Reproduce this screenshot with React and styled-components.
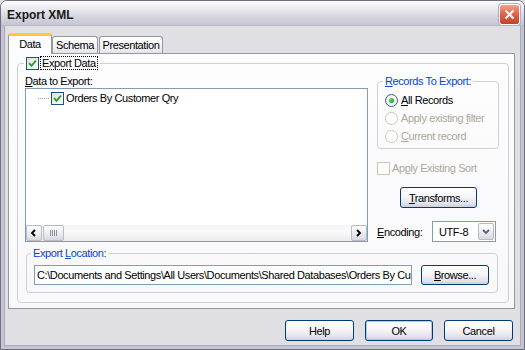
import React from "react";
import styled, { createGlobalStyle, css } from "styled-components";

const GlobalStyle = createGlobalStyle`
  html, body {
    margin: 0;
    padding: 0;
    background: #e0dfe3;
  }
  body {
    font-family: "Liberation Sans", Arial, sans-serif;
    font-size: 11px;
    letter-spacing: -0.4px;
    color: #000;
  }
  * {
    box-sizing: border-box;
  }
`;

const Frame = styled.div`
  width: 525px;
  height: 350px;
  display: flex;
  flex-direction: column;
  background: #e0dfe3;
  border: 1px solid #6f6f80;
  border-radius: 7px 7px 0 0;
  overflow: hidden;
`;

const TitleBar = styled.div`
  height: 25px;
  flex: none;
  display: flex;
  align-items: center;
  justify-content: space-between;
  padding: 3px 4px 0 6px;
  background: linear-gradient(180deg, #ffffff 0%, #eeeef3 25%, #d9d9e2 60%, #c6c6d4 100%);
  border-bottom: 1px solid #b8b8c8;
`;

const Title = styled.div`
  font-size: 12px;
  font-weight: bold;
  letter-spacing: 0;
  color: #1a1a1a;
`;

const CloseButton = styled.div`
  width: 21px;
  height: 21px;
  border: 1px solid #fff;
  border-radius: 3px;
  background: linear-gradient(180deg, #f0a48c 0%, #e2654a 45%, #c8412a 100%);
  display: flex;
  align-items: center;
  justify-content: center;
  box-shadow: 0 0 0 1px #b0b0c0;
`;

const Body = styled.div`
  flex: 1;
  display: flex;
  flex-direction: column;
  padding: 7px 5px 0 4px;
  border-left: 3px solid #c4c4d2;
  border-right: 3px solid #c4c4d2;
  border-bottom: 3px solid #c4c4d2;
  box-shadow: inset 1px 0 #a8a8b8, inset -1px 0 #a8a8b8, inset 0 -1px #a8a8b8;
`;

const TabRow = styled.div`
  display: flex;
  align-items: flex-end;
  height: 21px;
  margin-bottom: -1px;
  position: relative;
  z-index: 1;
`;

const Tab = styled.div`
  width: ${(p) => p.$w}px;
  margin-left: ${(p) => p.$ml || 0}px;
  display: flex;
  align-items: center;
  justify-content: center;
  border: 1px solid #919b9c;
  border-bottom: none;
  border-radius: 3px 3px 0 0;
  ${(p) =>
    p.$active
      ? css`
          height: 21px;
          background: #fcfcfe;
          border-top: 3px solid #ffc83c;
          padding-bottom: 2px;
        `
      : css`
          height: 17px;
          margin-bottom: 1px;
          background: linear-gradient(180deg, #ffffff 0%, #f3f3f6 60%, #e2e2ea 100%);
        `}
`;

const TabPanel = styled.div`
  height: 256px;
  width: 507px;
  border: 1px solid #919b9c;
  background: linear-gradient(180deg, #fdfdfe 0%, #f8f8fa 100%);
  padding: 2px 5px 5px 8px;
`;

const Group = styled.fieldset`
  min-width: 0;
  border: 1px solid #d0d0d4;
  border-radius: 4px;
  padding: ${(p) => p.$pad};
  margin: ${(p) => p.$margin || 0};
`;

const Legend = styled.legend`
  padding: 0 2px;
  margin-left: ${(p) => p.$ml || 0}px;
  height: 14px;
  line-height: 14px;
  color: ${(p) => p.$color || "#0046d5"};
  display: flex;
  align-items: center;
`;

const FocusLabel = styled.span`
  border: 1px dotted #000;
  padding: 0 1px;
  line-height: 12px;
  margin-left: 1px;
`;

const U = styled.span`
  text-decoration: underline;
  text-underline-offset: 1px;
`;

const MainRow = styled.div`
  display: flex;
  gap: 9px;
`;

const LeftCol = styled.div`
  width: 343px;
  display: flex;
  flex-direction: column;
`;

const RightCol = styled.div`
  width: 122px;
  display: flex;
  flex-direction: column;
`;

const FieldLabel = styled.div`
  height: 14px;
  line-height: 14px;
  margin-top: 4px;
`;

const ListBox = styled.div`
  height: 154px;
  border: 1px solid #7f9db9;
  background: #fff;
  display: flex;
  flex-direction: column;
`;

const TreeArea = styled.div`
  flex: 1;
  padding: 2px 0 0 12px;
`;

const TreeRow = styled.div`
  height: 14px;
  display: flex;
  align-items: center;
`;

const TreeLine = styled.div`
  width: 11px;
  border-top: 1px dotted #a0a0a0;
  margin-right: 2px;
`;

const TreeText = styled.span`
  margin-left: 2px;
`;

const HScroll = styled.div`
  height: 16px;
  display: flex;
  align-items: stretch;
  gap: 1px;
  background: linear-gradient(180deg, #f4f4f6 0%, #fafafb 40%, #ececf0 100%);
`;

const ScrollButton = styled.div`
  width: 16px;
  border: 1px solid #b8bcc8;
  border-radius: 2px;
  background: linear-gradient(180deg, #ffffff 0%, #eeeef2 50%, #d8d8e0 100%);
  display: flex;
  align-items: center;
  justify-content: center;
`;

const Thumb = styled(ScrollButton)`
  width: 21px;
  margin-right: auto;
`;

const Grip = styled.div`
  width: 7px;
  height: 6px;
  background: repeating-linear-gradient(90deg, #8d8da0 0 1px, transparent 1px 2px);
`;

const CheckBox = styled.div`
  width: 13px;
  height: 13px;
  flex: none;
  border: 1px solid ${(p) => (p.$disabled ? "#cac8bb" : "#1c5180")};
  background: ${(p) =>
    p.$disabled ? "#fff" : "linear-gradient(135deg, #dcdcd7 0%, #f4f4f2 60%, #ffffff 100%)"};
  display: flex;
  align-items: center;
  justify-content: center;
`;

const RadioRow = styled.div`
  height: 18px;
  display: flex;
  align-items: center;
  gap: 3px;
  color: ${(p) => (p.$disabled ? "#aca899" : "#000")};
`;

const Radio = styled.div`
  width: 13px;
  height: 13px;
  border-radius: 50%;
  flex: none;
  border: 1px solid ${(p) => (p.$disabled ? "#cac8bb" : "#3a5f86")};
  background: ${(p) =>
    p.$disabled ? "#fff" : "radial-gradient(circle at 60% 60%, #ffffff 0%, #e8e8e4 100%)"};
  display: flex;
  align-items: center;
  justify-content: center;
  &::after {
    content: "";
    display: ${(p) => (p.$checked ? "block" : "none")};
    width: 5px;
    height: 5px;
    border-radius: 50%;
    background: radial-gradient(circle at 40% 40%, #5ee05e 0%, #21a121 70%);
  }
`;

const CheckRow = styled.div`
  height: 14px;
  margin-top: 12px;
  display: flex;
  align-items: center;
  gap: 2px;
  color: ${(p) => (p.$disabled ? "#aca899" : "#000")};
`;

const Button = styled.div`
  width: ${(p) => p.$w}px;
  height: ${(p) => p.$h || 21}px;
  border: 1px solid #003c74;
  border-radius: 3px;
  background: linear-gradient(180deg, #ffffff 0%, #f6f6f9 45%, #e4e4ec 80%, #cfcfdc 100%);
  display: flex;
  align-items: center;
  justify-content: center;
  flex: none;
  ${(p) =>
    p.$default &&
    css`
      box-shadow: inset 0 0 0 1px #b6c8ee;
    `}
`;

const TransformsButton = styled(Button)`
  margin-top: 12px;
  align-self: center;
  margin-left: 1px;
`;

const EncodingRow = styled.div`
  margin-top: 13px;
  height: 21px;
  display: flex;
  align-items: center;
`;

const EncodingLabel = styled.div`
  width: 55px;
`;

const Select = styled.div`
  width: 64px;
  height: 21px;
  border: 1px solid #7f9db9;
  background: #fff;
  display: flex;
  align-items: center;
  padding: 0 1px 0 6px;
`;

const SelectValue = styled.div`
  flex: 1;
`;

const DropButton = styled(ScrollButton)`
  height: 17px;
  width: 16px;
  border-color: #b4b8c8;
`;

const LocationRow = styled.div`
  display: flex;
  align-items: center;
  gap: 9px;
`;

const TextInput = styled.div`
  width: 378px;
  height: 20px;
  flex: none;
  border: 1px solid #7f9db9;
  background: #fff;
  padding: 0 2px;
  line-height: 18px;
  white-space: nowrap;
  overflow: hidden;
`;

const Footer = styled.div`
  margin-top: 11px;
  display: flex;
  justify-content: flex-end;
  gap: 11px;
  padding-right: 3px;
`;

const Check = () => (
  <svg width="9" height="9" viewBox="0 0 9 9">
    <path d="M1 4.2 L3.5 6.8 L8 1.5" fill="none" stroke="#21a121" strokeWidth="1.9" />
  </svg>
);

const Chevron = ({ dir }) => {
  const d = { left: "M5 1 L2 4 L5 7", right: "M2 1 L5 4 L2 7", down: "M1 2 L4 5 L7 2" }[dir];
  return (
    <svg width="8" height="8" viewBox="0 0 8 8">
      <path d={d} fill="none" stroke={dir === "down" ? "#4d6185" : "#000"} strokeWidth="1.8" />
    </svg>
  );
};

const App = () => (
  <>
    <GlobalStyle />
    <Frame>
      <TitleBar>
        <Title>Export XML</Title>
        <CloseButton>
          <svg width="11" height="11" viewBox="0 0 11 11">
            <path d="M1.5 1.5 L9.5 9.5 M9.5 1.5 L1.5 9.5" stroke="#fff" strokeWidth="2" />
          </svg>
        </CloseButton>
      </TitleBar>
      <Body>
        <TabRow>
          <Tab $w={44} $active>
            Data
          </Tab>
          <Tab $w={46}>Schema</Tab>
          <Tab $w={64} $ml={1}>
            Presentation
          </Tab>
        </TabRow>
        <TabPanel>
          <Group $pad="0 9px 9px 7px">
            <Legend $color="#000" $ml={-1}>
              <CheckBox>
                <Check />
              </CheckBox>
              <FocusLabel>Export Data</FocusLabel>
            </Legend>
            <MainRow>
              <LeftCol>
                <FieldLabel>
                  <U>D</U>ata to Export:
                </FieldLabel>
                <ListBox>
                  <TreeArea>
                    <TreeRow>
                      <TreeLine />
                      <CheckBox>
                        <Check />
                      </CheckBox>
                      <TreeText>Orders By Customer Qry</TreeText>
                    </TreeRow>
                  </TreeArea>
                  <HScroll>
                    <ScrollButton>
                      <Chevron dir="left" />
                    </ScrollButton>
                    <Thumb>
                      <Grip />
                    </Thumb>
                    <ScrollButton>
                      <Chevron dir="right" />
                    </ScrollButton>
                  </HScroll>
                </ListBox>
              </LeftCol>
              <RightCol>
                <Group $pad="3px 6px 3px 7px" $margin="4px 0 0 0">
                  <Legend $ml={-2}>
                    <span>
                      <U>R</U>ecords To Export:
                    </span>
                  </Legend>
                  <RadioRow>
                    <Radio $checked />
                    <span>
                      <U>A</U>ll Records
                    </span>
                  </RadioRow>
                  <RadioRow $disabled>
                    <Radio $disabled />
                    <span>
                      Apply existing <U>f</U>ilter
                    </span>
                  </RadioRow>
                  <RadioRow $disabled>
                    <Radio $disabled />
                    <span>
                      <U>C</U>urrent record
                    </span>
                  </RadioRow>
                </Group>
                <CheckRow $disabled>
                  <CheckBox $disabled />
                  <span>
                    Ap<U>p</U>ly Existing Sort
                  </span>
                </CheckRow>
                <TransformsButton $w={77}>
                  <span>
                    <U>T</U>ransforms...
                  </span>
                </TransformsButton>
                <EncodingRow>
                  <EncodingLabel>
                    <U>E</U>ncoding:
                  </EncodingLabel>
                  <Select>
                    <SelectValue>UTF-8</SelectValue>
                    <DropButton>
                      <Chevron dir="down" />
                    </DropButton>
                  </Select>
                </EncodingRow>
              </RightCol>
            </MainRow>
            <Group $pad="5px 8px 7px 7px" $margin="4px 1px 0 1px">
              <Legend $ml={-3}>
                <span>
                  Export <U>L</U>ocation:
                </span>
              </Legend>
              <LocationRow>
                <TextInput>
                  C:\Documents and Settings\All Users\Documents\Shared Databases\Orders By Cus
                </TextInput>
                <Button $w={68} $h={20}>
                  <span>
                    <U>B</U>rowse...
                  </span>
                </Button>
              </LocationRow>
            </Group>
          </Group>
        </TabPanel>
        <Footer>
          <Button $w={69}>Help</Button>
          <Button $w={68} $default>
            OK
          </Button>
          <Button $w={69}>Cancel</Button>
        </Footer>
      </Body>
    </Frame>
  </>
);

export default App;
